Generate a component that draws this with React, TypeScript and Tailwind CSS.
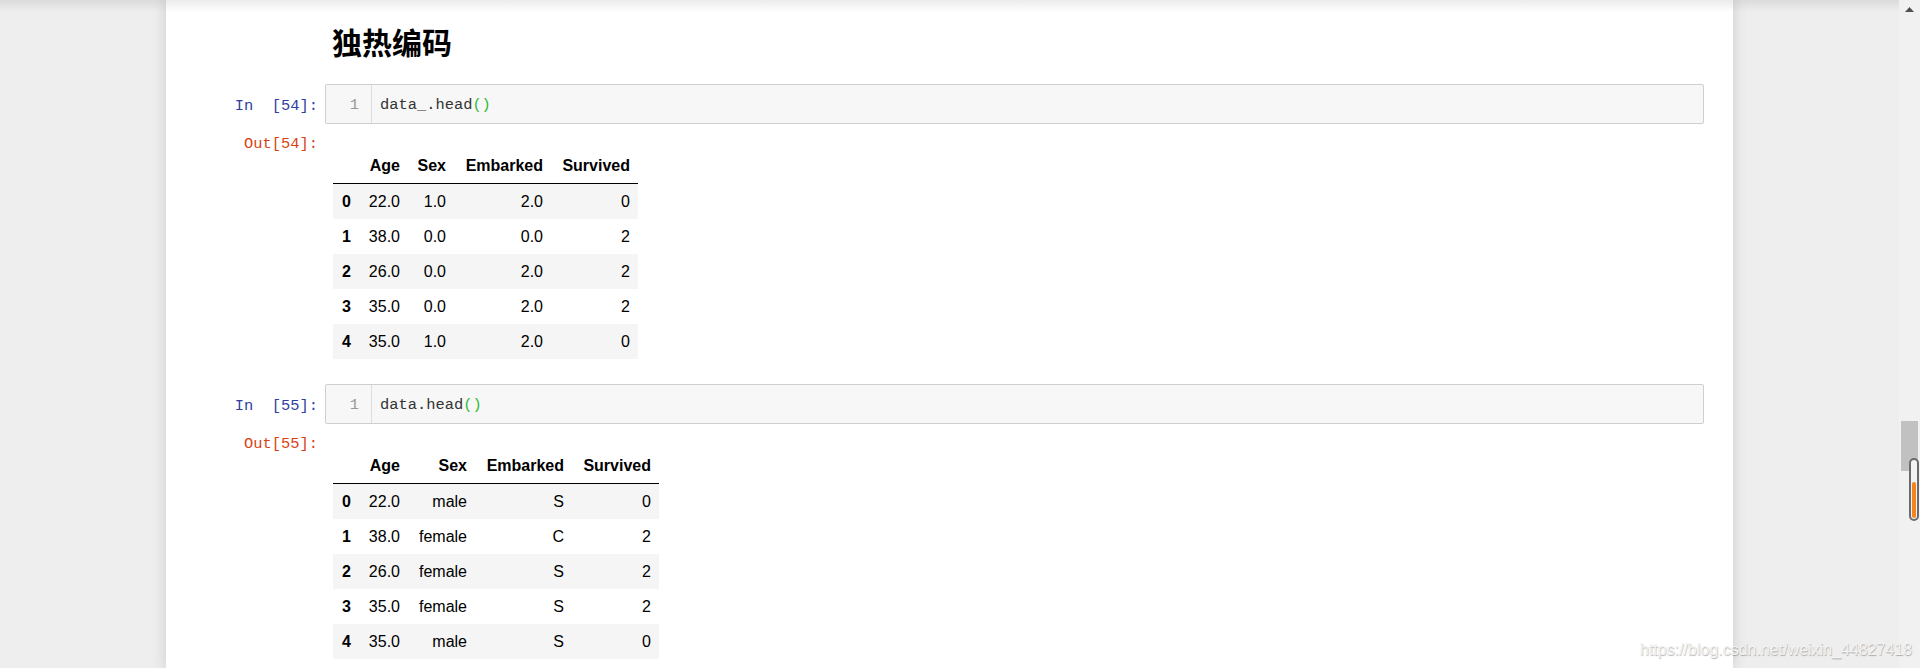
import React from 'react';

type TableData = {
  cols: string[];
  widths: string[];
  rows: string[][];
};

const encoded: TableData = {
  cols: ['Age', 'Sex', 'Embarked', 'Survived'],
  widths: ['w-[26px]', 'w-[49px]', 'w-[46px]', 'w-[97px]', 'w-[87px]'],
  rows: [
    ['0', '22.0', '1.0', '2.0', '0'],
    ['1', '38.0', '0.0', '0.0', '2'],
    ['2', '26.0', '0.0', '2.0', '2'],
    ['3', '35.0', '0.0', '2.0', '2'],
    ['4', '35.0', '1.0', '2.0', '0'],
  ],
};

const raw: TableData = {
  cols: ['Age', 'Sex', 'Embarked', 'Survived'],
  widths: ['w-[26px]', 'w-[49px]', 'w-[67px]', 'w-[97px]', 'w-[87px]'],
  rows: [
    ['0', '22.0', 'male', 'S', '0'],
    ['1', '38.0', 'female', 'C', '2'],
    ['2', '26.0', 'female', 'S', '2'],
    ['3', '35.0', 'female', 'S', '2'],
    ['4', '35.0', 'male', 'S', '0'],
  ],
};

const mono = "[font-family:'Liberation_Mono',monospace] text-[15.4px]";

function CodeCell({ n, name }: { n: number; name: string }) {
  return (
    <div className="flex">
      <div className={`${mono} h-[40px] w-[152px] whitespace-pre pt-[2px] text-right leading-[40px] text-[#303f9f]`}>
        In  [{n}]:
      </div>
      <div className="ml-[7px] mr-[29px] flex h-[40px] flex-1 items-center rounded-[2px] border border-[#cfcfcf] bg-[#f7f7f7]">
        <div className={`${mono} h-full w-[46px] border-r border-[#dddddd] pr-[12px] pt-[2px] text-right leading-[36px] text-[#999999]`}>
          1
        </div>
        <div className={`${mono} h-full pl-[8px] pt-[2px] leading-[36px] text-[#333333]`}>
          {name}.head<span className="text-[#33bb33]">()</span>
        </div>
      </div>
    </div>
  );
}

function Output({ n, data }: { n: number; data: TableData }) {
  return (
    <div className="flex">
      <div className={`${mono} w-[152px] pt-[9px] text-right leading-[22px] text-[#d84315]`}>
        Out[{n}]:
      </div>
      <div className="ml-[15px] pt-[25px]">
        <table className="table-fixed border-separate border-spacing-0 text-[16px] text-black">
          <thead>
            <tr>
              <th className={`${data.widths[0]} border-b border-black py-[8px] pr-[8px] leading-[18px]`} />
              {data.cols.map((c, i) => (
                <th
                  key={c}
                  className={`${data.widths[i + 1]} border-b border-black py-[8px] pr-[8px] text-right font-bold leading-[18px]`}
                >
                  {c}
                </th>
              ))}
            </tr>
          </thead>
          <tbody>
            {data.rows.map((r, ri) => (
              <tr key={ri} className={ri % 2 === 0 ? 'bg-[#f5f5f5]' : 'bg-white'}>
                {r.map((v, ci) =>
                  ci === 0 ? (
                    <th key={ci} className="py-[8px] pr-[8px] text-right font-bold leading-[19px]">
                      {v}
                    </th>
                  ) : (
                    <td key={ci} className="py-[8px] pr-[8px] text-right leading-[19px]">
                      {v}
                    </td>
                  )
                )}
              </tr>
            ))}
          </tbody>
        </table>
      </div>
    </div>
  );
}

export default function App() {
  return (
    <div className="relative flex h-[668px] w-full overflow-hidden bg-[#eeeeee] [font-family:'Liberation_Sans',Arial,sans-serif]">
      {/* notebook area */}
      <div className="relative flex-1">
        <div className="mx-auto h-full w-[1567px] bg-white pt-[21px] shadow-[0_0_12px_1px_rgba(87,87,87,0.2)]">
          <h2 className="mb-[23px] pl-[166px] text-[30px] font-bold leading-[40px] text-black [font-family:'Noto_Sans_CJK_SC','Liberation_Sans',sans-serif]">
            独热编码
          </h2>

          <CodeCell n={54} name="data_" />
          <Output n={54} data={encoded} />

          <div className="mt-[25px]">
            <CodeCell n={55} name="data" />
            <Output n={55} data={raw} />
          </div>
        </div>
        {/* header shadow */}
        <div className="pointer-events-none absolute inset-x-0 top-0 h-[12px] bg-linear-to-b from-black/8 to-transparent" />
      </div>

      {/* scrollbar */}
      <div className="relative h-full w-[21px] bg-[#f1f1f1]">
        <svg className="absolute left-[6px] top-[7px]" width="9" height="5" viewBox="0 0 9 5">
          <polygon points="4.5,0 9,5 0,5" fill="#505050" />
        </svg>
        <div className="absolute left-[2px] top-[421px] h-[50px] w-[17px] bg-[#c1c1c1]" />
        <div className="absolute left-[10px] top-[458px] flex h-[63px] w-[10px] flex-col justify-end rounded-full border-2 border-[#6b6b6b] bg-[#f3f3f3] p-[1px]">
          <div className="h-[36px] w-full rounded-full bg-[#f5841f]" />
        </div>
      </div>

      {/* watermark */}
      <div className="pointer-events-none absolute left-[1640px] top-[640px] whitespace-nowrap text-[16px] leading-[19px] text-[#f3f3f3] [text-shadow:0.5px_0.5px_1px_rgba(0,0,0,0.3)]">
        https://blog.csdn.net/weixin_44827418
      </div>
    </div>
  );
}
